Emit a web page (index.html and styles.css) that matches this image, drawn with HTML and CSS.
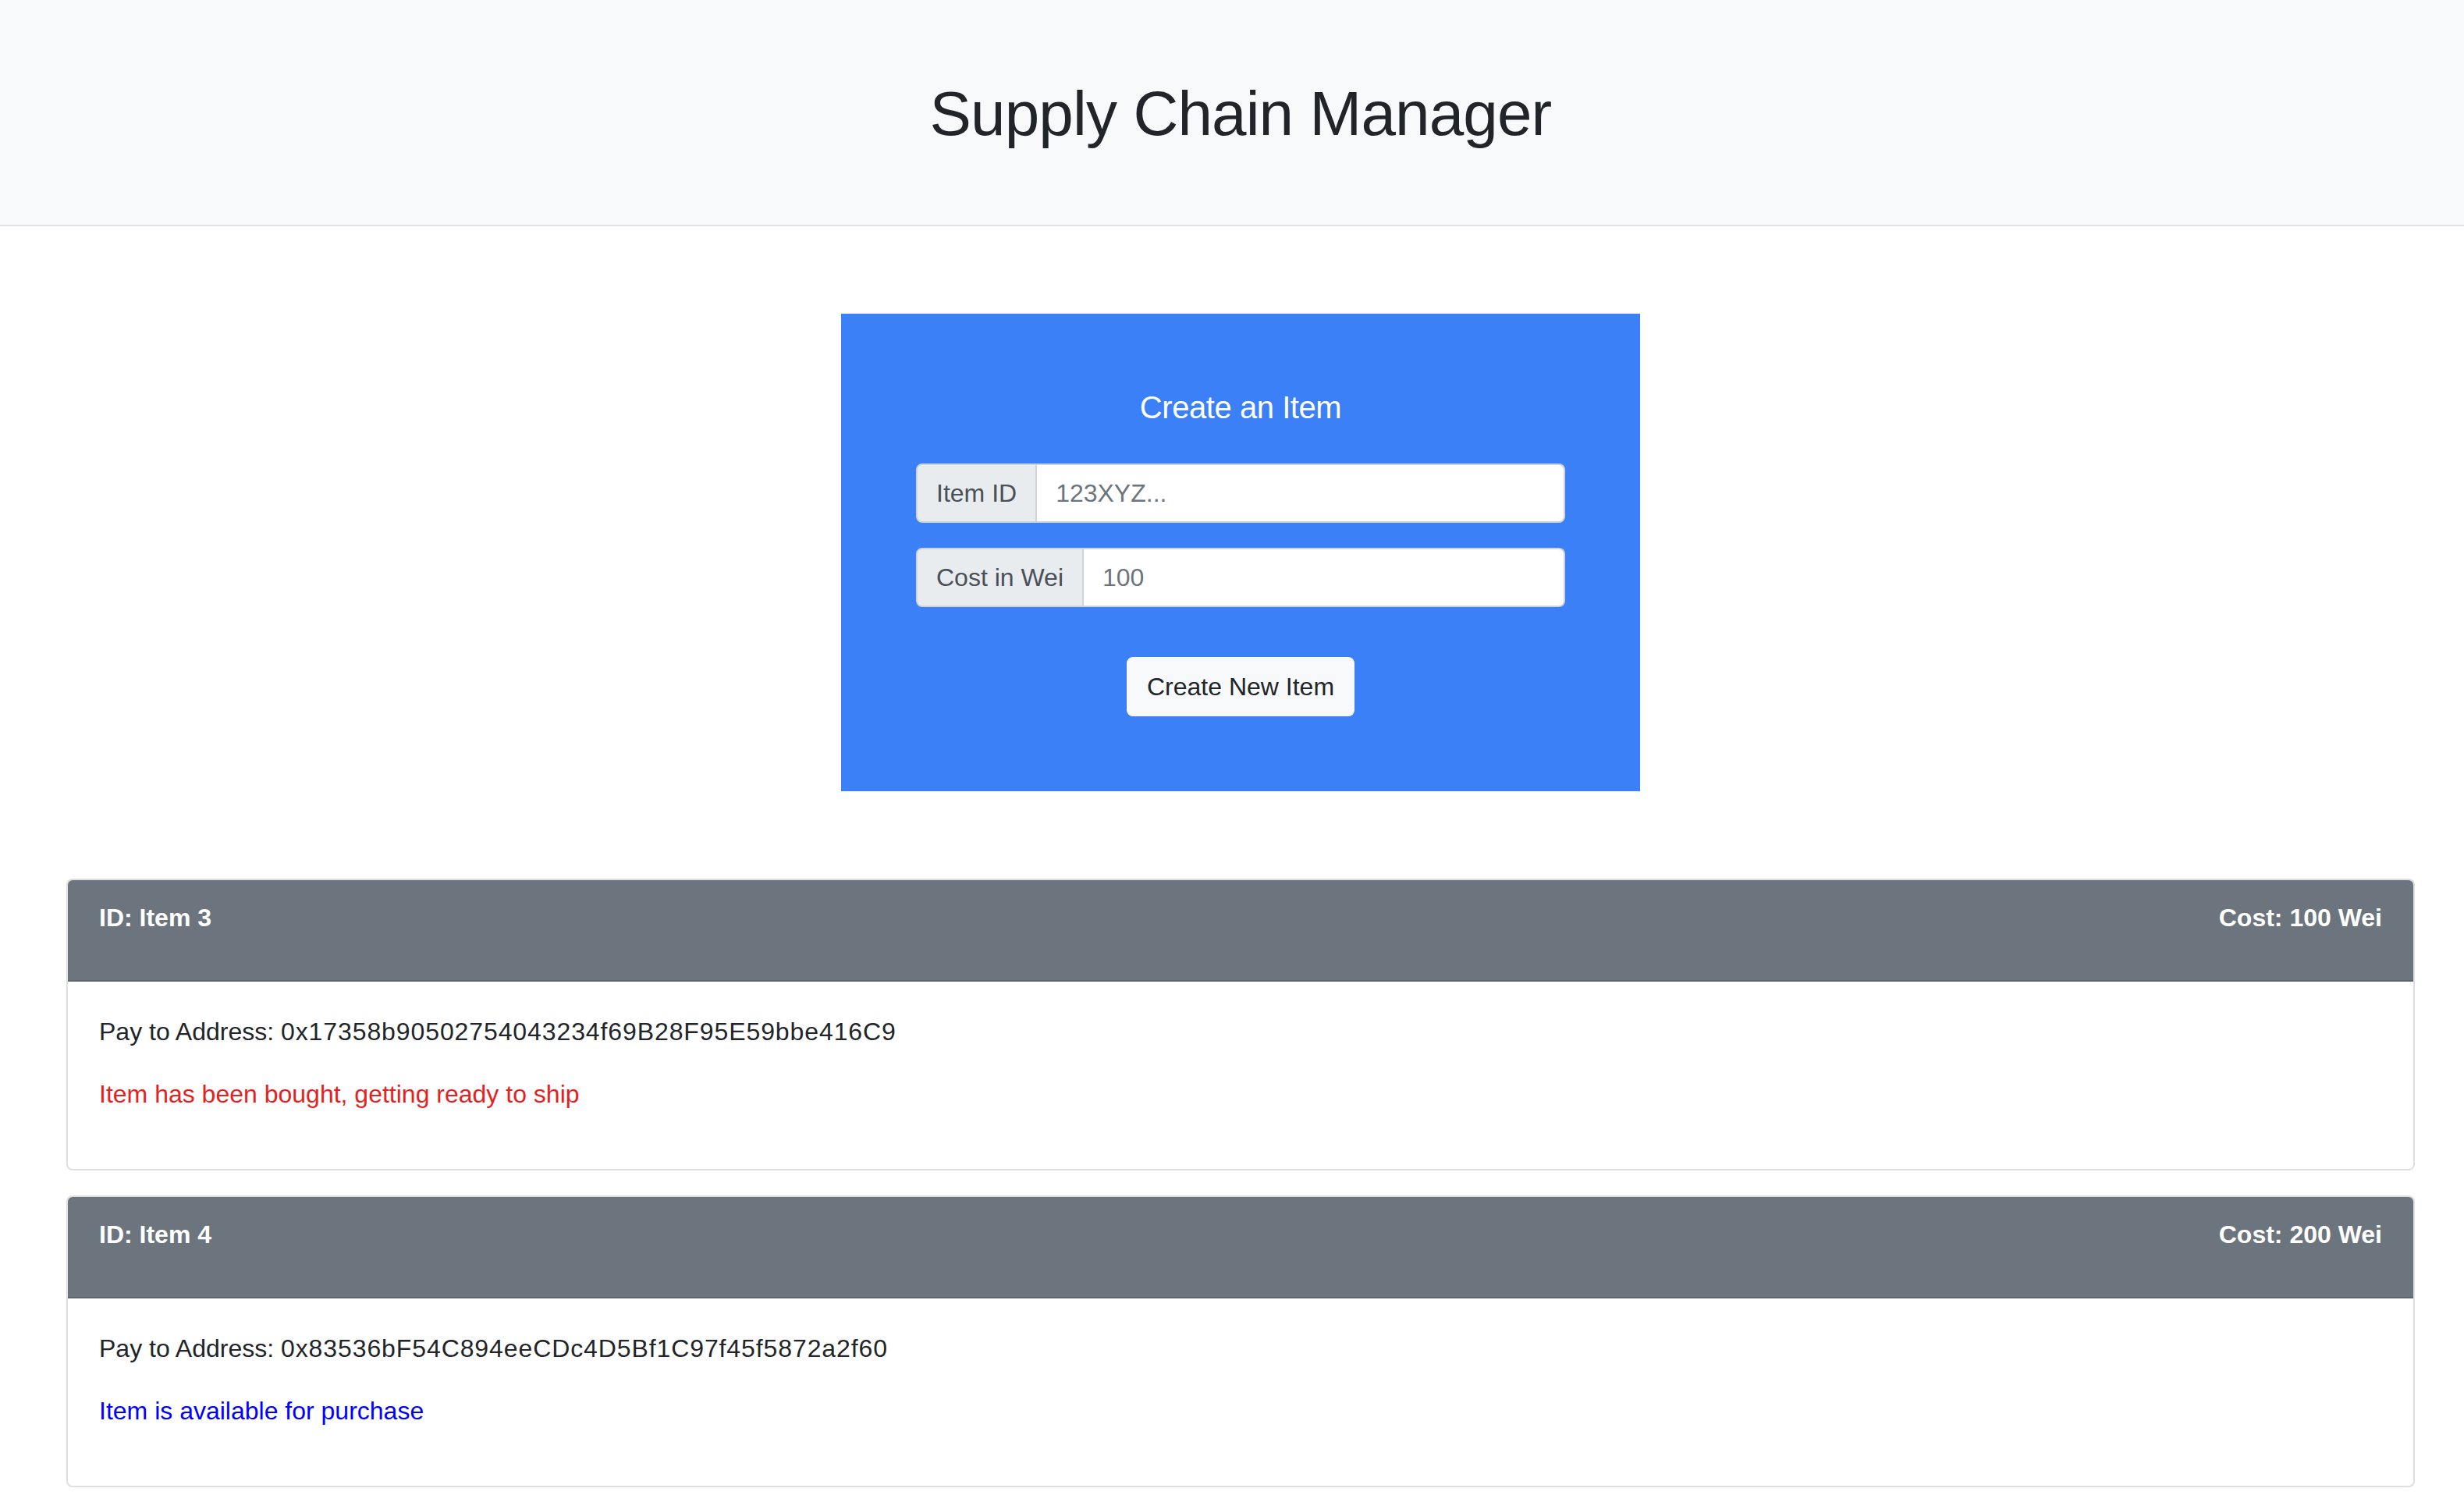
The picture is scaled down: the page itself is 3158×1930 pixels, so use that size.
FILE: index.html
```html
<!DOCTYPE html>
<html lang="en">
<head>
<meta charset="utf-8">
<title>Supply Chain Manager</title>
<link rel="stylesheet" href="styles.css">
</head>
<body>
  <header class="topbar">
    <h1 class="topbar-title">Supply Chain Manager</h1>
  </header>
  <main class="main">
    <section class="create-card">
      <h5 class="create-title">Create an Item</h5>
      <div class="input-group">
        <span class="addon">Item ID</span>
        <input class="field" type="text" placeholder="123XYZ...">
      </div>
      <div class="input-group">
        <span class="addon">Cost in Wei</span>
        <input class="field" type="text" placeholder="100">
      </div>
      <div class="actions">
        <button class="btn-light" type="button">Create New Item</button>
      </div>
    </section>

    <div class="items">
      <article class="item-card">
        <div class="item-header">
          <strong>ID: Item 3</strong>
          <strong>Cost: 100 Wei</strong>
        </div>
        <div class="item-body">
          <p class="item-line">Pay to Address: <span class="addr">0x17358b90502754043234f69B28F95E59bbe416C9</span></p>
          <p class="item-line status-bought">Item has been bought, getting ready to ship</p>
        </div>
      </article>
      <article class="item-card">
        <div class="item-header">
          <strong>ID: Item 4</strong>
          <strong>Cost: 200 Wei</strong>
        </div>
        <div class="item-body">
          <p class="item-line">Pay to Address: <span class="addr">0x83536bF54C894eeCDc4D5Bf1C97f45f5872a2f60</span></p>
          <p class="item-line status-available">Item is available for purchase</p>
        </div>
      </article>
    </div>
  </main>
</body>
</html>
```

FILE: styles.css
```css
* { box-sizing: border-box; }

html, body {
  margin: 0;
  padding: 0;
  background: #ffffff;
  overflow: hidden;
}

body {
  font-family: "Liberation Sans", Arial, Helvetica, sans-serif;
  font-size: 32px;
  line-height: 48px;
  color: #212529;
}

.topbar {
  background: #f8f9fa;
  border-bottom: 2px solid #dee2e6;
  padding: 98px 0 94px 22px;
  height: 290px;
}

.topbar-title {
  margin: 0;
  text-align: center;
  font-size: 80px;
  line-height: 96px;
  font-weight: 400;
  letter-spacing: -0.85px;
  color: #212529;
}

.main {
  padding: 112px 63px 0 85px;
}

.create-card {
  width: 1024px;
  margin: 0 auto;
  background: #3b80f6;
  padding: 96px 96px;
}

.create-title {
  margin: 0 0 48px;
  text-align: center;
  color: #ffffff;
  font-size: 40px;
  line-height: 48px;
  font-weight: 400;
  letter-spacing: -0.45px;
}

.input-group {
  display: flex;
  height: 76px;
  margin-bottom: 32px;
}

.addon {
  display: flex;
  align-items: center;
  padding: 12px 24px;
  background: #e9ecef;
  color: #495057;
  border: 2px solid #ced4da;
  border-radius: 8px 0 0 8px;
  white-space: nowrap;
}

.field {
  flex: 1;
  min-width: 0;
  height: 76px;
  padding: 12px 24px;
  border: 2px solid #ced4da;
  border-left: 0;
  border-radius: 0 8px 8px 0;
  background: #ffffff;
  font-family: inherit;
  font-size: 32px;
  line-height: 48px;
  color: #495057;
  outline: none;
}

.field::placeholder {
  color: #6c757d;
  opacity: 1;
}

.actions {
  display: flex;
  justify-content: center;
  padding-top: 32px;
}

.btn-light {
  height: 76px;
  padding: 12px 24px;
  background: #f8f9fa;
  border: 2px solid #f8f9fa;
  border-radius: 8px;
  font-family: inherit;
  font-size: 32px;
  line-height: 48px;
  color: #212529;
  cursor: pointer;
}

.items {
  display: flex;
  flex-direction: column;
  gap: 32px;
  margin-top: 112px;
}

.item-card {
  border: 2px solid rgba(0, 0, 0, 0.125);
  border-radius: 8px;
  overflow: hidden;
  background: #ffffff;
}

.item-header {
  display: flex;
  justify-content: space-between;
  align-items: flex-start;
  background: #6c757d;
  color: #ffffff;
  padding: 24px 40px 56px;
  border-bottom: 2px solid rgba(0, 0, 0, 0.125);
  font-weight: 700;
}

.item-body {
  padding: 40px 40px 40px;
}

.item-line {
  margin: 0 0 32px;
}

.addr {
  letter-spacing: 0.9px;
}

.status-bought {
  color: #e3231f;
}

.status-available {
  color: #0000ff;
}
```
